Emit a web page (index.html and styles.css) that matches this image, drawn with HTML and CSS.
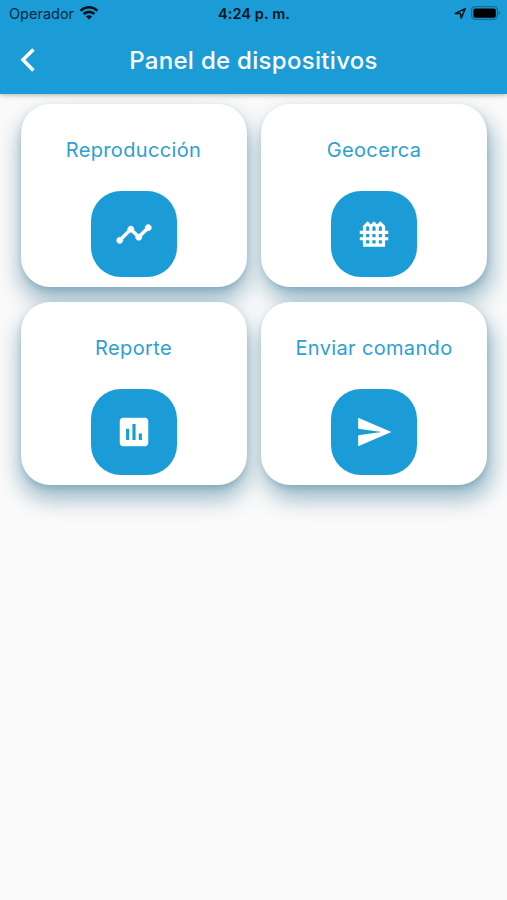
FILE: index.html
```
<!DOCTYPE html>
<html lang="es">
<head>
    <meta charset="UTF-8">
    <title>Panel de dispositivos</title>
    <link rel="stylesheet" href="styles.css">
</head>
<body>
    <div id="header">
        <div class="status">
            <div class="carrier">
                <span>Operador</span>
                <svg width="20" height="14" viewBox="0 0 20 14">
                    <path d="M1.6 4.7a12 12 0 0 1 16.8 0M4.6 8a7.8 7.8 0 0 1 10.8 0" fill="none" stroke="#04141d" stroke-width="2.7"/>
                    <path d="M10 13.6L6.9 10.5a4.4 4.4 0 0 1 6.2 0z" fill="#04141d"/>
                </svg>
            </div>
            <span class="time">4:24 p. m.</span>
            <div class="power">
                <svg width="13" height="13" viewBox="0 0 13 13">
                    <path d="M1.3 6.4L11.2 1.6 7.2 11.2 6.4 6.6z" fill="none" stroke="#04141d" stroke-width="1.5" stroke-linejoin="round"/>
                </svg>
                <svg width="30" height="14" viewBox="0 0 30 14">
                    <rect x=".6" y=".6" width="25.8" height="12.8" rx="3.8" fill="none" stroke="#116a94" stroke-width="1.2"/>
                    <rect x="2.4" y="2.4" width="22.4" height="9.4" rx="1.8" fill="#000"/>
                    <path d="M27.6 4.8v4.4c2-.8 2-3.6 0-4.4z" fill="#116a94"/>
                </svg>
            </div>
        </div>
        <div class="bar">
            <svg class="back" width="16" height="26" viewBox="0 0 16 26">
                <path d="M13.4 2.4L3 12.8l10.4 10.6" fill="none" stroke="#fff" stroke-width="3.6"/>
            </svg>
            <h1>Panel de dispositivos</h1>
        </div>
    </div>

    <ul id="panel">
        <li>
            <p>Reproducción</p>
            <div class="icon">
                <svg class="timeline" viewBox="0 0 24 24"><path d="M23 8c0 1.1-.9 2-2 2-.18 0-.35-.02-.51-.07l-3.56 3.55c.05.16.07.34.07.52 0 1.1-.9 2-2 2s-2-.9-2-2c0-.18.02-.36.07-.52l-2.55-2.55c-.16.05-.34.07-.52.07s-.36-.02-.52-.07l-4.55 4.56c.05.16.07.33.07.51 0 1.1-.9 2-2 2s-2-.9-2-2 .9-2 2-2c.18 0 .35.02.51.07l4.56-4.55C8.02 9.36 8 9.18 8 9c0-1.1.9-2 2-2s2 .9 2 2c0 .18-.02.36-.07.52l2.55 2.55c.16-.05.34-.07.52-.07s.36.02.52.07l3.55-3.56C19.02 8.35 19 8.18 19 8c0-1.1.9-2 2-2s2 .9 2 2z"/></svg>
            </div>
        </li>
        <li>
            <p>Geocerca</p>
            <div class="icon">
                <svg viewBox="0 0 24 24"><path d="M21 12v-2h-2V7l-3-3-2 2-2-2-2 2-2-2-3 3v3H3v2h2v2H3v2h2v4h14v-4h2v-2h-2v-2h2zm-5-5.17l1 1V10h-2V7.83l.41-.41.59-.59zm-4 0l.59.59.41.41V10h-2V7.83l.41-.41.59-.59zM11 14v-2h2v2h-2zm2 2v2h-2v-2h2zM7 7.83l1-1 .59.59.41.41V10H7V7.83zM7 12h2v2H7v-2zm0 4h2v2H7v-2zm10 2h-2v-2h2v2zm0-4h-2v-2h2v2z"/></svg>
            </div>
        </li>
        <li>
            <p>Reporte</p>
            <div class="icon">
                <svg viewBox="0 0 24 24"><path d="M19 3H5c-1.1 0-2 .9-2 2v14c0 1.1.9 2 2 2h14c1.1 0 2-.9 2-2V5c0-1.1-.9-2-2-2zM9 17H7v-7h2v7zm4 0h-2V7h2v10zm4 0h-2v-4h2v4z"/></svg>
            </div>
        </li>
        <li>
            <p>Enviar comando</p>
            <div class="icon">
                <svg viewBox="0 0 24 24"><path d="M2.01 21L23 12 2.01 3 2 10l15 2-15 2z"/></svg>
            </div>
        </li>
    </ul>
</body>
</html>
```
FILE: styles.css
```
*{
    padding: 0;
    margin: 0;
    box-sizing: border-box;
}
body{
    min-height: 100vh;
    background: #fafafa;
    font-family: Inter, "Liberation Sans", sans-serif;
    overflow: hidden;
}
ul{
    list-style: none;
}
svg{
    display: block;
}
#header{
    position: relative;
    height: 94px;
    background: #1b9cd6;
    box-shadow: 0 1px 5px rgba(0,0,0,.3);
}
.status{
    height: 27px;
    padding: 0 6px 0 9px;
    display: grid;
    grid-template-columns: 1fr auto 1fr;
    align-items: center;
    font-size: 14.5px;
    color: #06293b;
}
.carrier{
    display: flex;
    align-items: center;
    gap: 5px;
}
.carrier svg{
    margin-top: -1px;
}
.status .time{
    font-weight: 600;
    letter-spacing: .1px;
    margin-right: 2px;
    color: #04141d;
}
.power{
    display: flex;
    justify-content: flex-end;
    align-items: center;
    gap: 4px;
}
.power svg{
    margin-top: -1px;
}
.bar{
    height: 66px;
    padding: 0 20px;
    display: grid;
    grid-template-columns: 16px 1fr 16px;
    align-items: center;
}
h1{
    font-size: 24px;
    font-weight: 500;
    letter-spacing: .3px;
    color: #fff;
    text-align: center;
}
#panel{
    padding: 10px 20px 10px 20.5px;
    display: grid;
    grid-template-columns: 226px 226px;
    gap: 15px 14.5px;
}
#panel li{
    height: 183px;
    padding-top: 31px;
    border-radius: 29px;
    background: #fff;
    box-shadow: 0 13px 22px 1px rgba(20,95,130,.42), 0 3px 6px rgba(20,95,130,.2);
}
#panel li:nth-child(even){
    box-shadow: 4px 13px 22px 1px rgba(20,95,130,.42), 1px 3px 6px rgba(20,95,130,.2);
}
#panel p{
    line-height: 30px;
    font-size: 20px;
    letter-spacing: .35px;
    text-align: center;
    color: #2d9fd2;
}
.icon{
    width: 86px;
    height: 86px;
    margin: 26px auto 0;
    border-radius: 30px;
    background: #1b9cd6;
    display: flex;
    align-items: center;
    justify-content: center;
}
.icon svg{
    width: 38px;
    height: 38px;
    fill: #fff;
}
.icon .timeline{
    stroke: #fff;
    stroke-width: .3;
}
```
